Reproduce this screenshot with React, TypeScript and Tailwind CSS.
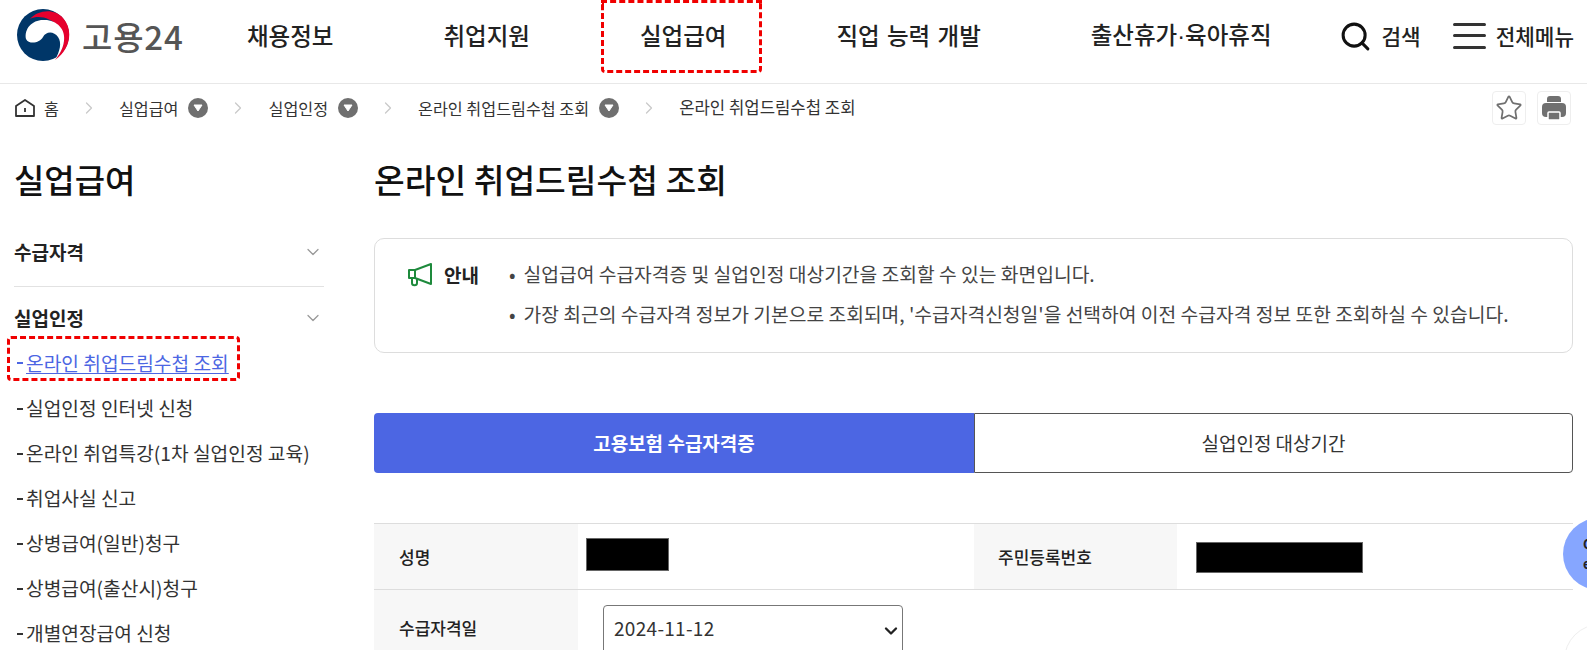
import { ChevronDown, ChevronRight, Search, Star } from 'lucide-react'

const font = { fontFamily: '"Noto Sans CJK KR", "Noto Sans", sans-serif' }

const crumbs = [
  { title: '실업급여', caret: true },
  { title: '실업인정', caret: true },
  { title: '온라인 취업드림수첩 조회', caret: true },
]

const sideLinks = [
  '실업인정 인터넷 신청',
  '온라인 취업특강(1차 실업인정 교육)',
  '취업사실 신고',
  '상병급여(일반)청구',
  '상병급여(출산시)청구',
  '개별연장급여 신청',
]

function Logo() {
  return (
    <svg width="56" height="54" viewBox="0 0 56 54" className="shrink-0">
      <circle cx="27" cy="26" r="26" fill="#003668" />
      <path d="M14 10C22 1 38 -1 47 9C58 21 54 41 39 51C48 40 51 27 43 18C34 8 22 6 14 10Z" fill="#e6002d" />
      <path d="M10 30C8 20 16 11 27 11C40 10 50 20 48 32C47 40 43 46 39 51C44 42 46 34 42 28C38 22 30 22 27 28C24 34 13 36 10 30Z" fill="#fff" />
    </svg>
  )
}

function HomeIcon() {
  return (
    <svg width="22" height="20" viewBox="0 0 22 20" fill="none" stroke="#333" strokeWidth="1.8">
      <path d="M2 8L11 2L20 8V18H2Z" strokeLinejoin="round" />
      <path d="M11 10V14" />
    </svg>
  )
}

function CaretBadge() {
  return (
    <span className="flex h-5 w-5 items-center justify-center rounded-full bg-[#6f6f6f]">
      <svg width="10" height="8" viewBox="0 0 10 8">
        <path d="M1 1H9L5 7Z" fill="#fff" stroke="#fff" strokeLinejoin="round" />
      </svg>
    </span>
  )
}

function Megaphone() {
  return (
    <svg width="24" height="24" viewBox="0 0 24 24" fill="none" stroke="#1e8a3c" strokeWidth="2" strokeLinejoin="round" className="mt-[4px]">
      <path d="M1 7H7L23 1V21L7 15H1Z" />
      <path d="M7 7V15" />
      <path d="M4 15V20C4 23 9 23 9 20V16" />
    </svg>
  )
}

function PrintIcon() {
  return (
    <svg width="24" height="24" viewBox="0 0 24 24">
      <path d="M5 6V3C5 1 6 0 8 0H16C18 0 19 1 19 3V6Z" fill="#707070" />
      <rect x="0" y="7" width="24" height="14" rx="4" fill="#707070" />
      <rect x="6" y="16" width="12" height="8" rx="1" fill="#707070" stroke="#fff" strokeWidth="1.5" />
    </svg>
  )
}

function MenuBars() {
  return (
    <svg width="33" height="26" viewBox="0 0 33 26" fill="#333">
      <rect y="0" width="33" height="3" rx="1.5" />
      <rect y="11" width="33" height="3" rx="1.5" />
      <rect y="23" width="33" height="3" rx="1.5" />
    </svg>
  )
}

export default function App() {
  return (
    <div style={font} className="relative h-[650px] w-[1587px] overflow-hidden bg-white text-[#333]">
      <header className="flex h-[84px] items-center border-b border-[#e8e8e8] pb-[11px] pl-4 pr-[13px]">
        <Logo />
        <span className="ml-[10px] w-[98px] shrink-0 whitespace-nowrap text-[33px] font-medium leading-none tracking-wide text-[#555]">고용24</span>
        <nav className="ml-[67px] flex items-center gap-[110px] whitespace-nowrap text-[23.5px] font-medium text-[#222]">
          <a>채용정보</a>
          <a>취업지원</a>
          <a>실업급여</a>
          <a className="[word-spacing:2px]">직업 능력 개발</a>
          <a>
            출산휴가<span className="font-['Liberation_Sans']">·</span>육아휴직
          </a>
        </nav>
        <div className="ml-auto flex items-center gap-[9px]">
          <Search className="h-[33px] w-[33px] text-[#111]" strokeWidth={2.2} />
          <span className="text-[21.3px] font-medium text-[#222]">검색</span>
        </div>
        <div className="ml-[32px] flex items-center gap-[10px]">
          <MenuBars />
          <span className="text-[21.3px] font-medium text-[#222]">전체메뉴</span>
        </div>
      </header>

      {/* dashed highlight over the active menu */}
      <div className="absolute left-[601px] top-0 h-[73px] w-[161px] rounded-b border-[3px] border-dashed border-[#f00000]" />

      <div className="flex h-[48px] items-center pl-[14px] pr-[16px] text-[16.2px] text-[#333]">
        <HomeIcon />
        <span className="ml-[8px]">홈</span>
        {crumbs.map(crumb => (
          <div key={crumb.title} className="flex items-center">
            <ChevronRight className="mx-[20px] h-5 w-5 text-[#c9c9c9]" strokeWidth={1.5} />
            <span>{crumb.title}</span>
            <span className="ml-[10px]"><CaretBadge /></span>
          </div>
        ))}
        <ChevronRight className="mx-[20px] h-5 w-5 text-[#c9c9c9]" strokeWidth={1.5} />
        <span className="text-[16.7px]">온라인 취업드림수첩 조회</span>
        <div className="ml-auto flex gap-[11px]">
          <span className="flex h-[34px] w-[34px] items-center justify-center rounded border border-[#eee]">
            <Star className="h-7 w-7 text-[#707070]" strokeWidth={1.5} />
          </span>
          <span className="flex h-[34px] w-[34px] items-center justify-center rounded border border-[#eee]">
            <PrintIcon />
          </span>
        </div>
      </div>

      <div className="flex">
        <aside className="ml-[14px] w-[310px] shrink-0">
          <h2 className="mt-[23px] text-[33px] font-medium leading-[48px] text-[#111]">실업급여</h2>
          <div className="mt-[33px] flex h-[32px] items-center justify-between pr-[1px]">
            <span className="text-[19px] font-semibold text-[#222]">수급자격</span>
            <ChevronDown className="h-5 w-5 text-[#999]" strokeWidth={1.5} />
          </div>
          <div className="mt-[18px] border-t border-[#e2e2e2]" />
          <div className="mt-[15px] flex h-[32px] items-center justify-between pr-[1px]">
            <span className="text-[19px] font-semibold text-[#222]">실업인정</span>
            <ChevronDown className="h-5 w-5 text-[#999]" strokeWidth={1.5} />
          </div>
          <div className="relative mt-[6px] flex h-[46px] items-center text-[19.2px] text-[#4c66e3]">
            <span className="ml-[3px] mr-[3px] h-[2px] w-[6px] bg-current" />
            <a className="underline underline-offset-2">온라인 취업드림수첩 조회</a>
            <div className="absolute -left-[7px] -top-[4px] h-[45px] w-[233px] rounded border-[3px] border-dashed border-[#f00000]" />
          </div>
          {sideLinks.map(link => (
            <div key={link} className="flex h-[45px] items-center text-[19.2px] text-[#333]">
              <span className="ml-[3px] mr-[3px] h-[2px] w-[6px] bg-current" />
              {link}
            </div>
          ))}
        </aside>

        <main className="ml-[50px] w-[1199px] shrink-0">
          <h1 className="mt-[23px] text-[33.4px] font-medium leading-[48px] text-[#111]">온라인 취업드림수첩 조회</h1>
          <section className="mt-[35px] flex h-[115px] rounded-[10px] border border-[#ddd] pl-[33px] pt-[20px]">
            <Megaphone />
            <strong className="ml-3 w-[65px] text-[19px] font-semibold leading-[32px] text-[#222]">안내</strong>
            <ul className="-mt-[4px] text-[19.25px] leading-[39.5px] text-[#444]">
              <li className="before:mr-[8px] before:content-['•']">실업급여 수급자격증 및 실업인정 대상기간을 조회할 수 있는 화면입니다.</li>
              <li className="before:mr-[8px] before:content-['•']">가장 최근의 수급자격 정보가 기본으로 조회되며, '수급자격신청일'을 선택하여 이전 수급자격 정보 또한 조회하실 수 있습니다.</li>
            </ul>
          </section>

          <div className="mt-[60px] flex h-[60px] text-[19px]">
            <button className="w-[600px] rounded-l bg-[#4c66e3] font-semibold text-white">고용보험 수급자격증</button>
            <button className="flex-1 rounded-r border border-[#555] text-[#333]">실업인정 대상기간</button>
          </div>

          <div className="mt-[50px] border-t border-[#ddd] text-[17px]">
            <div className="flex h-[66px] border-b border-[#ddd]">
              <div className="flex w-[204px] items-center bg-[#f7f7f7] pl-[25px] font-medium text-[#222]">성명</div>
              <div className="flex w-[396px] items-center pl-[8px]">
                <div className="mb-[5px] h-[33px] w-[83px] border border-[#666] bg-black" />
              </div>
              <div className="flex w-[203px] items-center bg-[#f7f7f7] pl-[24px] font-medium text-[#222]">주민등록번호</div>
              <div className="flex flex-1 items-center pl-[19px]">
                <div className="mt-[1px] h-[31px] w-[167px] border border-[#666] bg-black" />
              </div>
            </div>
            <div className="flex h-[80px]">
              <div className="flex w-[204px] bg-[#f7f7f7] pl-[25px] pt-[25px] font-medium text-[#222]">수급자격일</div>
              <div className="relative ml-[25px] mt-[15px] h-[50px]">
                <select className="h-[50px] w-[300px] appearance-none rounded border border-[#777] bg-white pb-[4px] pl-[10px] text-[19px] tracking-[0.3px] text-[#333]" defaultValue="2024-11-12">
                  <option>2024-11-12</option>
                </select>
                <ChevronDown className="absolute right-[2px] top-[16px] h-5 w-5 text-[#222]" strokeWidth={2.8} />
              </div>
            </div>
          </div>
        </main>
      </div>

      {/* floating assistant button, cut by the window edge */}
      <div className="absolute left-[1563px] top-[518px] flex h-[72px] w-[72px] flex-col justify-center rounded-full bg-[#86a6ff] pl-5 text-[13px] font-bold leading-[20px] text-[#222]">
        <span>Q</span>
        <span>e</span>
      </div>
      <div className="absolute left-[1564px] top-[624px] h-[72px] w-[72px] rounded-full border border-[#eee] bg-white" />
    </div>
  )
}
